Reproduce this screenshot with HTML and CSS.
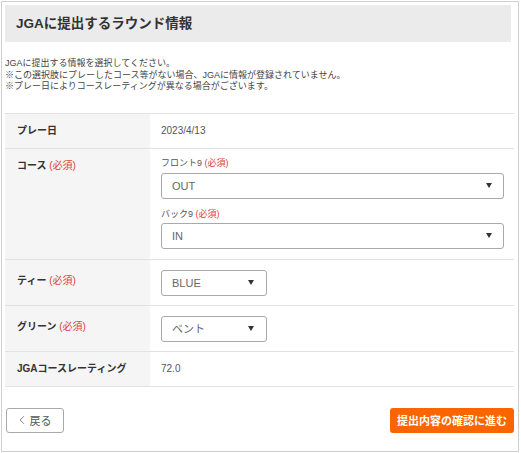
FILE: index.html
```html
<!DOCTYPE html>
<html lang="ja">
<head>
<meta charset="utf-8">
<link rel="stylesheet" href="styles.css">
</head>
<body>
<div class="frame">
  <div class="head"><h1 class="title">JGAに提出するラウンド情報</h1></div>
  <p class="lead">JGAに提出する情報を選択してください。<br>※この選択肢にプレーしたコース等がない場合、JGAに情報が登録されていません。<br>※プレー日によりコースレーティングが異なる場合がございます。</p>
  <div class="table">
    <div class="row">
      <div class="th th-plain">プレー日</div>
      <div class="td td-plain">2023/4/13</div>
    </div>
    <div class="row">
      <div class="th th-course">コース <span class="req">(必須)</span></div>
      <div class="td td-course">
        <div class="sub">フロント9 <span class="req">(必須)</span></div>
        <div class="select wide"><span>OUT</span><svg class="caret" viewBox="0 0 6 5"><path d="M0 0H6L3 5Z"/></svg></div>
        <div class="sub sub2">バック9 <span class="req">(必須)</span></div>
        <div class="select wide"><span>IN</span><svg class="caret" viewBox="0 0 6 5"><path d="M0 0H6L3 5Z"/></svg></div>
      </div>
    </div>
    <div class="row">
      <div class="th th-sel">ティー <span class="req">(必須)</span></div>
      <div class="td td-sel">
        <div class="select short"><span>BLUE</span><svg class="caret" viewBox="0 0 6 5"><path d="M0 0H6L3 5Z"/></svg></div>
      </div>
    </div>
    <div class="row">
      <div class="th th-sel">グリーン <span class="req">(必須)</span></div>
      <div class="td td-sel">
        <div class="select short"><span>ベント</span><svg class="caret" viewBox="0 0 6 5"><path d="M0 0H6L3 5Z"/></svg></div>
      </div>
    </div>
    <div class="row">
      <div class="th th-plain">JGAコースレーティング</div>
      <div class="td td-plain">72.0</div>
    </div>
  </div>
  <div class="actions">
    <button class="btn back"><svg class="chev" viewBox="0 0 8 12"><path d="M6.5 1L1.5 6L6.5 11"/></svg>戻る</button>
    <button class="btn next">提出内容の確認に進む</button>
  </div>
</div>
</body>
</html>
```

FILE: styles.css
```css
* { box-sizing: border-box; }
html, body { margin: 0; padding: 0; background: #fff; }
body {
  font-family: "Liberation Sans", "Noto Sans CJK JP", sans-serif;
  color: #333;
  width: 521px;
  height: 453px;
  overflow: hidden;
}
.frame {
  margin: 1px 0 0 1px;
  width: 518px;
  height: 451px;
  border: 1px solid #cfcfcf;
  padding: 3px 4px 0 3px;
}
.head {
  background: #ebebeb;
  height: 37px;
  margin-right: 3px;
  display: flex;
  align-items: center;
  padding-left: 11px;
}
.title {
  margin: 0;
  font-size: 13.5px;
  font-weight: bold;
  color: #333;
  line-height: 1;
}
.lead {
  margin: 16px 0 0;
  font-size: 9px;
  line-height: 11.5px;
  color: #444;
}
.table {
  margin-top: 20px;
  border-top: 1px solid #e2e2e2;
}
.row {
  display: grid;
  grid-template-columns: 145px 1fr;
  border-bottom: 1px solid #e2e2e2;
}
.th {
  background: #f5f5f5;
  font-size: 10px;
  font-weight: bold;
  line-height: 12px;
  padding-left: 12px;
  color: #333;
}
.td {
  padding-left: 11px;
  padding-right: 10px;
  font-size: 10px;
  line-height: 12px;
  color: #555;
}
.req { color: #e0403c; font-weight: normal; }
.th-plain { padding-top: 11px; padding-bottom: 11px; }
.td-plain { padding-top: 11px; padding-bottom: 11px; }
.th-course { padding-top: 11px; }
.td-course { padding-top: 8px; padding-bottom: 10px; }
.th-sel { padding-top: 15px; }
.td-sel { padding-top: 10px; padding-bottom: 9px; }
.sub { font-size: 9px; line-height: 12px; color: #555; margin-bottom: 4px; }
.sub2 { margin-top: 9px; margin-bottom: 3px; }
.select {
  height: 26px;
  border: 1px solid #a9a9a9;
  border-radius: 3px;
  background: #fff;
  display: flex;
  align-items: center;
  justify-content: space-between;
  padding: 0 11px 0 10px;
  font-size: 11px;
  color: #666;
}
.select.short { width: 106px; padding-right: 12px; }
.caret { width: 6px; height: 5px; fill: #333; }
.actions {
  margin-top: 21px;
  display: flex;
  justify-content: space-between;
}
.btn {
  height: 25px;
  border-radius: 3px;
  font-family: inherit;
  font-size: 11px;
  display: flex;
  align-items: center;
  justify-content: center;
  cursor: pointer;
}
.back {
  width: 58px;
  margin-left: 1px;
  background: #fff;
  border: 1px solid #a9a9a9;
  color: #555;
  gap: 5px;
}
.chev { width: 6px; height: 10px; fill: none; stroke: #666; stroke-width: 1.1; }
.next {
  width: 124px;
  background: #fb6500;
  border: none;
  color: #fff;
  font-weight: bold;
}
```
